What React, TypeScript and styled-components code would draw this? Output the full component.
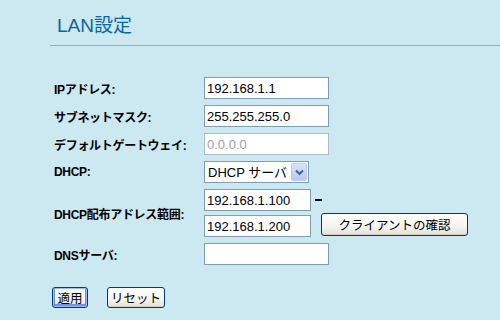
import { FC } from 'react';
import styled, { createGlobalStyle } from 'styled-components';

const GlobalStyle = createGlobalStyle`
  html, body {
    margin: 0;
    padding: 0;
    height: 100%;
    background: #cce8f0;
  }
  body {
    font-family: "Liberation Sans", "Noto Sans CJK JP", sans-serif;
  }
`;

const Page = styled.div`
  width: 500px;
  height: 320px;
  background: #cce8f0;
  overflow: hidden;
`;

const Header = styled.div`
  margin-left: 50px;
  padding: 16px 0 10px 7px;
  border-bottom: 1px solid #a4aaa6;
`;

const Title = styled.h1`
  margin: 0;
  font-family: "Liberation Sans", "Noto Sans CJK JP", sans-serif;
  font-size: 19px;
  line-height: 19px;
  font-weight: normal;
  color: #0a66a0;
`;

const Form = styled.form`
  margin: 31px 0 0 54px;
`;

const Grid = styled.div`
  display: grid;
  grid-template-columns: 150px auto;
  row-gap: 6px;
  align-items: center;
`;

const Label = styled.label`
  font-size: 12px;
  font-weight: bold;
  color: #000;
  white-space: nowrap;
  letter-spacing: -0.3px;
`;

const Field = styled.div`
  display: flex;
  align-items: center;
`;

const TextInput = styled.input<{ $w?: number }>`
  box-sizing: border-box;
  width: ${(p) => p.$w ?? 125}px;
  height: 22px;
  margin: 0;
  padding: 1px 2px 0;
  border: 1px solid #7f9db9;
  background: #fff;
  font-family: "Liberation Sans", sans-serif;
  font-size: 13px;
  color: #000;
  outline: none;

  &:disabled {
    color: #a0a0a0;
    border-color: #a9bccf;
    background: #fff;
  }
`;

const SelectBox = styled.div`
  box-sizing: border-box;
  display: flex;
  width: 105px;
  height: 22px;
  border: 1px solid #7f9db9;
  background: #fff;
`;

const NativeSelect = styled.select`
  flex: 1;
  min-width: 0;
  appearance: none;
  border: none;
  background: transparent;
  padding: 0 0 0 3px;
  margin: 0;
  font-family: "Liberation Sans", "Noto Sans CJK JP", sans-serif;
  font-size: 13px;
  color: #000;
  outline: none;
`;

const ArrowBox = styled.span`
  box-sizing: border-box;
  width: 16px;
  margin: 1px;
  display: flex;
  align-items: center;
  justify-content: center;
  border: 1px solid #b9caf5;
  border-radius: 2px;
  background: linear-gradient(#d8e4fe, #b5c8f7);
`;

const Range = styled.div`
  display: grid;
  grid-template-columns: 107px auto;
  grid-template-rows: 22px 22px;
  row-gap: 4px;
  align-items: center;
`;

const Dash = styled.span`
  margin-left: 4px;
  width: 7px;
  height: 2px;
  background: #000;
`;

const Button = styled.button<{ $w: number; $default?: boolean }>`
  box-sizing: border-box;
  width: ${(p) => p.$w}px;
  height: 21px;
  margin: 0;
  padding: 0;
  border: 1px solid #003c74;
  border-radius: 3px;
  background: linear-gradient(#ffffff 0%, #f4f3ee 60%, #e3e1d8 100%);
  font-family: "Noto Sans CJK JP", "Liberation Sans", sans-serif;
  font-size: 12.5px;
  line-height: 18px;
  color: #000;
  box-shadow: ${(p) =>
    p.$default ? 'inset 0 0 0 1px #9bbcf3, inset 0 -1px 0 2px #6e94e0' : 'inset 0 -1px 0 0 #d6d0c5'};
`;

const ClientButton = styled(Button)`
  margin-left: 10px;
  align-self: start;
  margin-top: -2px;
  height: 23px;
`;

const Actions = styled.div`
  display: flex;
  gap: 19px;
  margin: 22px 0 0 -2px;
`;

const Chevron: FC = () => (
  <svg width="9" height="7" viewBox="0 0 9 7">
    <path d="M1 1.5 L4.5 5 L8 1.5" fill="none" stroke="#4d6185" strokeWidth="2" />
  </svg>
);

export default function App() {
  return (
    <Page>
      <GlobalStyle />
      <Header>
        <Title>LAN設定</Title>
      </Header>
      <Form onSubmit={(e) => e.preventDefault()}>
        <Grid>
          <Label>IPアドレス:</Label>
          <Field>
            <TextInput defaultValue="192.168.1.1" />
          </Field>

          <Label>サブネットマスク:</Label>
          <Field>
            <TextInput defaultValue="255.255.255.0" />
          </Field>

          <Label>デフォルトゲートウェイ:</Label>
          <Field>
            <TextInput defaultValue="0.0.0.0" disabled />
          </Field>

          <Label>DHCP:</Label>
          <Field>
            <SelectBox>
              <NativeSelect defaultValue="server">
                <option value="server">DHCP サーバ</option>
                <option value="off">使用しない</option>
              </NativeSelect>
              <ArrowBox>
                <Chevron />
              </ArrowBox>
            </SelectBox>
          </Field>

          <Label>DHCP配布アドレス範囲:</Label>
          <Range>
            <TextInput $w={107} defaultValue="192.168.1.100" />
            <Dash />
            <TextInput $w={107} defaultValue="192.168.1.200" />
            <ClientButton type="button" $w={147}>
              クライアントの確認
            </ClientButton>
          </Range>

          <Label>DNSサーバ:</Label>
          <Field>
            <TextInput defaultValue="" />
          </Field>
        </Grid>
        <Actions>
          <Button type="submit" $w={36} $default>
            適用
          </Button>
          <Button type="reset" $w={58}>
            リセット
          </Button>
        </Actions>
      </Form>
    </Page>
  );
}
